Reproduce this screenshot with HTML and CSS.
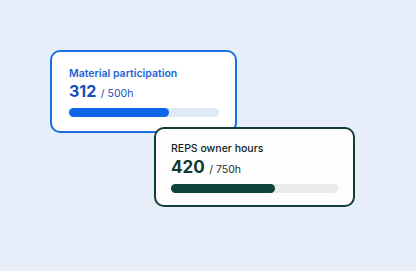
FILE: index.html
```html
<!DOCTYPE html>
<html>
<head>
<meta charset="utf-8">
<link rel="stylesheet" href="styles.css">
</head>
<body>
<div class="stage">
  <div class="card card-blue">
    <div class="title">Material participation</div>
    <div class="value"><span class="num">312</span> <span class="total">/ 500h</span></div>
    <div class="track"><div class="fill" style="width: 100px"></div></div>
  </div>
  <div class="card card-green">
    <div class="title">REPS owner hours</div>
    <div class="value"><span class="num">420</span> <span class="total">/ 750h</span></div>
    <div class="track"><div class="fill" style="width: 104px"></div></div>
  </div>
</div>
</body>
</html>
```
FILE: styles.css
```css
html, body {
  margin: 0;
  padding: 0;
  background: #e7eef9;
  font-family: Inter, "Noto Sans", sans-serif;
}
.stage {
  width: 416px;
  height: 271px;
  padding: 50px 0 0 50px;
  box-sizing: border-box;
  display: flex;
  flex-direction: column;
  align-items: flex-start;
}
.card {
  box-sizing: border-box;
  border-radius: 10px;
  border: 2px solid;
}
.title {
  font-size: 10.5px;
  line-height: 13px;
}
.value {
  margin-top: 1px;
  line-height: 20px;
}
.num {
  font-weight: 700;
  font-size: 16px;
}
.total {
  font-size: 10.5px;
}
.track {
  margin-top: 4px;
  height: 9px;
  border-radius: 5px;
}
.fill {
  height: 100%;
  border-radius: 5px;
}
.card-blue {
  width: 187px;
  height: 83px;
  padding: 15px 16px 0 17px;
  background: #ffffff;
  border-color: #1b6fe2;
}
.card-blue .title {
  font-weight: 600;
  color: #1c63d6;
}
.card-blue .value {
  color: #1551b8;
}
.card-blue .track {
  background: #deeaf8;
}
.card-blue .fill {
  background: #0d65e8;
}
.card-green {
  position: relative;
  margin: -6px 0 0 104px;
  width: 201px;
  height: 80px;
  padding: 13px 15px 0 15px;
  background: #fcfdfc;
  border-color: #0f3f37;
}
.card-green .title {
  font-weight: 500;
  color: #142320;
}
.card-green .value {
  margin-top: 2px;
  line-height: 21px;
  color: #0f3a33;
}
.card-green .num {
  font-size: 17px;
}
.card-green .total {
  color: #1a2a27;
}
.card-green .track {
  background: #e8ebea;
}
.card-green .fill {
  background: #0c443b;
}
```
